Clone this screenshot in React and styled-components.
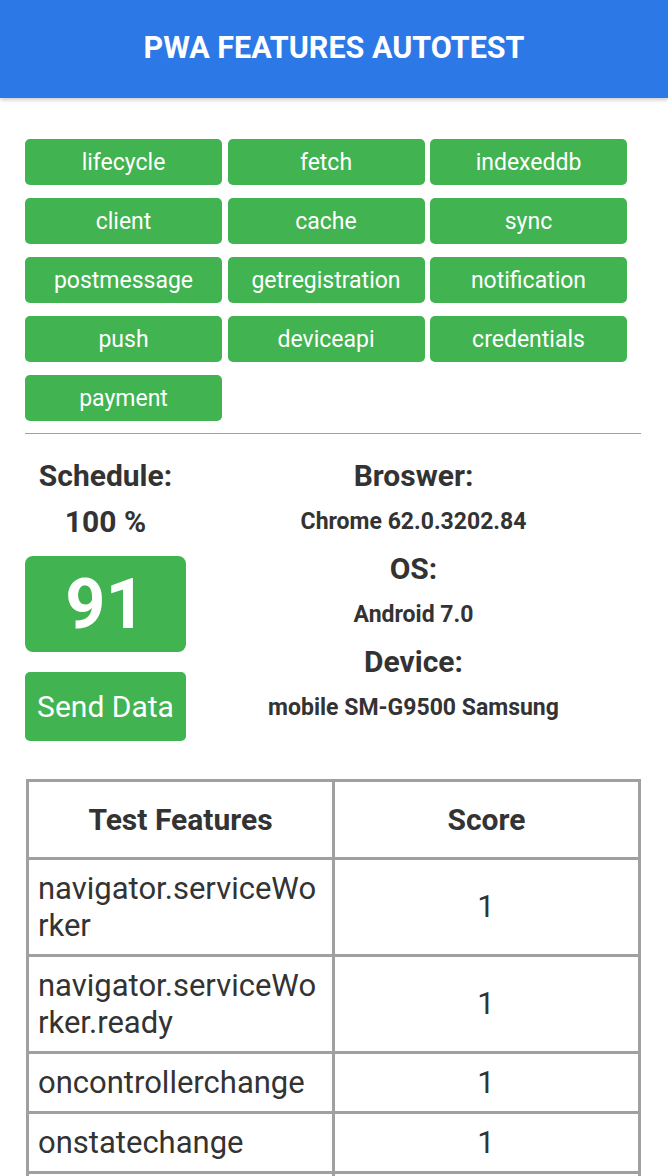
import styled, { createGlobalStyle } from "styled-components"

const features = [
  "lifecycle", "fetch", "indexeddb",
  "client", "cache", "sync",
  "postmessage", "getregistration", "notification",
  "push", "deviceapi", "credentials",
  "payment",
]

const results = [
  ["navigator.serviceWorker", 1],
  ["navigator.serviceWorker.ready", 1],
  ["oncontrollerchange", 1],
  ["onstatechange", 1],
  ["onupdatefound", 1],
  ["oninstall", 1],
]

export default function App() {
  return (
    <>
      <GlobalStyle />
      <St.Header>
        <St.Title>PWA FEATURES AUTOTEST</St.Title>
      </St.Header>
      <St.Main>
        <St.FeatureGrid>
          {features.map((name) => (
            <St.FeatureButton key={name}>{name}</St.FeatureButton>
          ))}
        </St.FeatureGrid>
        <St.Divider />

        <St.InfoSection>
          <St.ScheduleColumn>
            <St.Label>Schedule:</St.Label>
            <St.Label>100 %</St.Label>
            <St.ScoreBox>91</St.ScoreBox>
            <St.SendButton>Send Data</St.SendButton>
          </St.ScheduleColumn>
          <St.EnvColumn>
            <St.Label>Broswer:</St.Label>
            <St.Value>Chrome 62.0.3202.84</St.Value>
            <St.Label>OS:</St.Label>
            <St.Value>Android 7.0</St.Value>
            <St.Label>Device:</St.Label>
            <St.Value>mobile SM-G9500 Samsung</St.Value>
          </St.EnvColumn>
        </St.InfoSection>

        <St.Table>
          <thead>
            <tr>
              <St.HeadCell>Test Features</St.HeadCell>
              <St.HeadCell>Score</St.HeadCell>
            </tr>
          </thead>
          <tbody>
            {results.map(([name, score]) => (
              <tr key={name}>
                <St.Cell>{name}</St.Cell>
                <St.Cell $center>{score}</St.Cell>
              </tr>
            ))}
          </tbody>
        </St.Table>
      </St.Main>
    </>
  )
}

const GlobalStyle = createGlobalStyle`
  body {
    margin: 0;
    background: #fff;
    color: #333;
    font-family: Roboto, "Noto Sans", sans-serif;
  }
`

const green = "#41b350"

const St = {
  Header: styled.header`
    height: 98px;
    display: flex;
    align-items: center;
    justify-content: center;
    background-color: #2c78e6;
    box-shadow: 0 2px 4px rgba(0, 0, 0, 0.2);
  `,
  Title: styled.h1`
    margin: 0 0 4px;
    color: #fff;
    font-size: 30.5px;
    font-weight: 700;
  `,
  Main: styled.main`
    padding: 41px 27px 0 25px;
  `,
  FeatureGrid: styled.div`
    display: grid;
    grid-template-columns: repeat(3, 197px);
    column-gap: 5.5px;
    row-gap: 13px;
  `,
  FeatureButton: styled.div`
    height: 46px;
    display: flex;
    align-items: center;
    justify-content: center;
    border-radius: 5px;
    background-color: ${green};
    color: #fff;
    font-size: 23px;
  `,
  Divider: styled.hr`
    margin: 12px 0 0;
    border: 0;
    border-top: 1px solid #a0a0a0;
  `,
  InfoSection: styled.div`
    display: flex;
    margin-top: 19px;
  `,
  ScheduleColumn: styled.div`
    width: 161px;
    display: flex;
    flex-direction: column;
    text-align: center;
  `,
  EnvColumn: styled.div`
    flex: 1;
    text-align: center;
  `,
  Label: styled.div`
    line-height: 46.4px;
    font-size: 30px;
    font-weight: 700;
  `,
  Value: styled.div`
    line-height: 46.4px;
    font-size: 23px;
    font-weight: 700;
  `,
  ScoreBox: styled.div`
    height: 96px;
    margin-top: 10px;
    display: flex;
    align-items: center;
    justify-content: center;
    border-radius: 8px;
    background-color: ${green};
    color: #fff;
    font-size: 70px;
    font-weight: 700;
  `,
  SendButton: styled.div`
    height: 69px;
    margin-top: 20px;
    display: flex;
    align-items: center;
    justify-content: center;
    border-radius: 5px;
    background-color: ${green};
    color: #fff;
    font-size: 30px;
  `,
  Table: styled.table`
    width: calc(100% - 1px);
    margin: 38px 0 0 1px;
    table-layout: fixed;
    border-spacing: 0;
    border-top: 3px solid #a0a0a0;
    border-left: 3px solid #a0a0a0;
  `,
  HeadCell: styled.th`
    padding: 19px 10px;
    line-height: 37px;
    border-right: 3px solid #a0a0a0;
    border-bottom: 3px solid #a0a0a0;
    font-size: 30px;
    font-weight: 700;
  `,
  Cell: styled.td`
    padding: 10px 10px 10px 9px;
    line-height: 37px;
    border-right: 3px solid #a0a0a0;
    border-bottom: 3px solid #a0a0a0;
    font-size: 31px;
    text-align: ${(p) => (p.$center ? "center" : "left")};
    word-break: break-all;
  `,
}
